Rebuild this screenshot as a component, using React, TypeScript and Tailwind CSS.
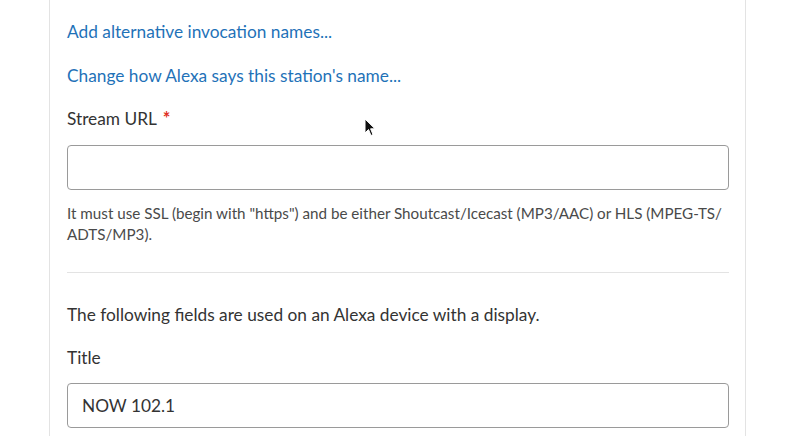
import React from 'react';

const font = {fontFamily: 'Lato, "Open Sans", sans-serif'};

const App = () => {
    return (
        <div className="w-[800px] h-[436px] overflow-hidden bg-white" style={font}>
            <div className="ml-[49px] w-[697px] h-full border-x border-[#e3e3e3] pl-[17px] pr-[16px]">
                <div className="pt-[20px] flex flex-col">
                    <a className="text-[17.3px] leading-[24px] text-[#1f72b8] cursor-pointer">Add alternative invocation names...</a>
                    <a className="mt-[20px] text-[17.3px] leading-[24px] text-[#1f72b8] cursor-pointer">Change how Alexa says this station's name...</a>
                    <div className="mt-[19px] h-[24px] text-[17.3px] leading-[24px] text-[#333] relative">
                        Stream URL <span className="ml-[2px] font-bold text-[18px] leading-none text-[#e0301e]">*</span>
                        <svg className="absolute left-[297px] top-[11px]" width="12" height="19" viewBox="0 0 12 19">
                            <path d="M1 1 L1 15 L4.5 11.5 L7 17.5 L9 16.6 L6.6 10.8 L11 10.8 Z" fill="#111" stroke="#fff" strokeWidth="1"/>
                        </svg>
                    </div>
                    <input className="mt-[14px] h-[45px] w-full rounded-[4px] border border-[#9a9a9a] px-[14px] text-[17.3px] outline-none" />
                    <p className="mt-[13px] text-[15.2px] leading-[21px] text-[#4a4a4a]">
                        It must use SSL (begin with "https") and be either Shoutcast/Icecast (MP3/AAC) or HLS (MPEG-TS/ ADTS/MP3).
                    </p>
                    <div className="mt-[27px] border-t border-[#e3e3e3]" />
                    <p className="mt-[30px] text-[17.3px] leading-[24px] text-[#333]">The following fields are used on an Alexa device with a display.</p>
                    <div className="mt-[19px] text-[17.3px] leading-[24px] text-[#333]">Title</div>
                    <input defaultValue="NOW 102.1" className="mt-[13px] h-[45px] w-full rounded-[4px] border border-[#9a9a9a] px-[14px] text-[17.3px] text-[#333] outline-none" />
                </div>
            </div>
        </div>
    );
};

export default App;
